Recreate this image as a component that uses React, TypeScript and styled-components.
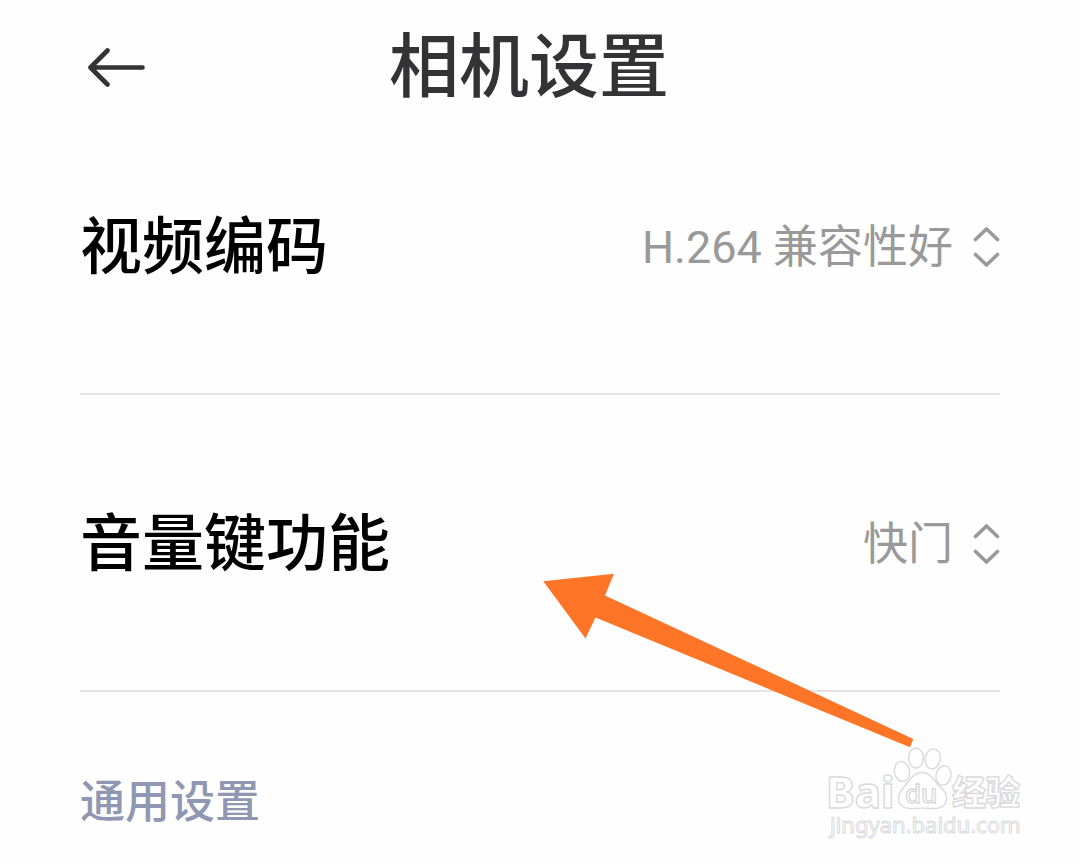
import React from "react";
import styled, { createGlobalStyle } from "styled-components";

const GlobalStyle = createGlobalStyle`
  *, *::before, *::after { box-sizing: border-box; }
  body {
    margin: 0;
    background: #fefefe;
    font-family: Roboto, "Noto Sans CJK SC", sans-serif;
  }
`;

const Page = styled.div`
  position: relative;
  min-height: 100vh;
  overflow: hidden;
`;

const Header = styled.header`
  display: grid;
  grid-template-columns: 1fr auto 1fr;
  align-items: center;
  padding: 38px 102px 0 80px;
`;

const BackButton = styled.button`
  justify-self: start;
  display: flex;
  padding: 0 7px;
  border: 0;
  background: none;
  color: #333335;
  cursor: pointer;
`;

const Title = styled.h1`
  margin: 0;
  font-size: 70px;
  line-height: 60px;
  font-weight: 500;
  color: #333335;
`;

const Settings = styled.main`
  padding: 0 80px;
`;

const Row = styled.div`
  display: flex;
  align-items: center;
  justify-content: space-between;
  padding: 118px 0 113px;
  border-bottom: 2px solid #e3e3e3;
`;

const RowLabel = styled.label`
  font-size: 62px;
  line-height: 64px;
  font-weight: 500;
  color: #000;
`;

const Picker = styled.div`
  display: flex;
  align-items: center;
  gap: 20px;
  color: #999;
`;

const Select = styled.select`
  appearance: none;
  field-sizing: content;
  padding: 0;
  border: 0;
  background: none;
  color: inherit;
  font-family: inherit;
  font-size: 45px;
  line-height: 64px;
  text-align: right;
  cursor: pointer;
`;

const SectionTitle = styled.h2`
  margin: 0;
  padding: 87px 0 34px;
  font-size: 45px;
  line-height: 48px;
  font-weight: 500;
  color: #9097b2;
`;

const Pointer = styled.svg`
  position: absolute;
  top: 573px;
  right: 166px;
  pointer-events: none;
`;

const Watermark = styled.svg`
  position: absolute;
  top: 743px;
  right: 50px;
  pointer-events: none;
`;

const BackIcon = () => (
  <svg width="58" height="40" viewBox="0 0 58 40" fill="none" stroke="currentColor" strokeWidth="4.6" strokeLinecap="round" strokeLinejoin="round" aria-hidden="true">
    <path d="M55.5 19.500H3.500M20.500 2.500L3.500 19.500L20.500 36.500" />
  </svg>
);

const UpDownIcon = () => (
  <svg width="27" height="42" viewBox="0 0 27 42" fill="none" stroke="currentColor" strokeWidth="3.600" strokeLinecap="round" strokeLinejoin="round" aria-hidden="true">
    <path d="M2.500 12.500L13.500 2L24.500 12.500M2.500 27.500L13.500 38L24.500 27.500" />
  </svg>
);

type SettingProps = { id: string; label: string; options: string[] };

const Setting = ({ id, label, options }: SettingProps) => (
  <Row>
    <RowLabel htmlFor={id}>{label}</RowLabel>
    <Picker>
      <Select id={id}>
        {options.map((o) => (
          <option key={o}>{o}</option>
        ))}
      </Select>
      <UpDownIcon />
    </Picker>
  </Row>
);

export default function App() {
  return (
    <>
      <GlobalStyle />
      <Page lang="zh-CN">
        <Header>
          <BackButton type="button" aria-label="返回">
            <BackIcon />
          </BackButton>
          <Title>相机设置</Title>
        </Header>
        <Settings>
          <Setting id="codec" label="视频编码" options={["H.264 兼容性好"]} />
          <Setting id="volume" label="音量键功能" options={["快门"]} />
          <SectionTitle>通用设置</SectionTitle>
        </Settings>
        <Pointer width="371" height="175" viewBox="543 573 371 175" aria-hidden="true">
          <path d="M543.300 581.200L614 573.800L605 595.500L913.300 739L910 747.200L595.500 617.500L585.500 638.500Z" fill="#ff7527" />
        </Pointer>
        <Watermark width="210" height="100" viewBox="820 743 210 100" fill="#fff" stroke="#dadadc" strokeWidth="1.400" aria-hidden="true">
          <g fontFamily="Noto Sans, sans-serif" fontWeight="800">
            <text x="826" y="808" fontSize="43">Bai</text>
            <ellipse cx="916" cy="758" rx="7.300" ry="10" />
            <ellipse cx="932.700" cy="758.800" rx="7.500" ry="10" transform="rotate(10 932.700 758.800)" />
            <ellipse cx="902" cy="771.500" rx="7.500" ry="10" transform="rotate(-10 902 771.500)" />
            <ellipse cx="943.500" cy="775.500" rx="7.500" ry="9.800" transform="rotate(12 943.500 775.500)" />
            <path d="M922 772.500C930 772.500 933 779 938 785C943 790 947 792 946.500 799C946 806 940 809 933 808.500C927 808 918 808 911 808.500C904 809 898.500 805 898.500 798C898.500 791 904 788 908 782C912 776 916 772.500 922 772.500Z" />
            <text x="905" y="803" fontSize="26" fontWeight="500">du</text>
            <text x="952" y="805" fontSize="34" fontFamily="Noto Sans CJK SC, sans-serif">经验</text>
          </g>
          <text x="830" y="833" fontSize="22" strokeWidth="1" fontFamily="Noto Sans, sans-serif">jingyan.baidu.com</text>
        </Watermark>
      </Page>
    </>
  );
}
